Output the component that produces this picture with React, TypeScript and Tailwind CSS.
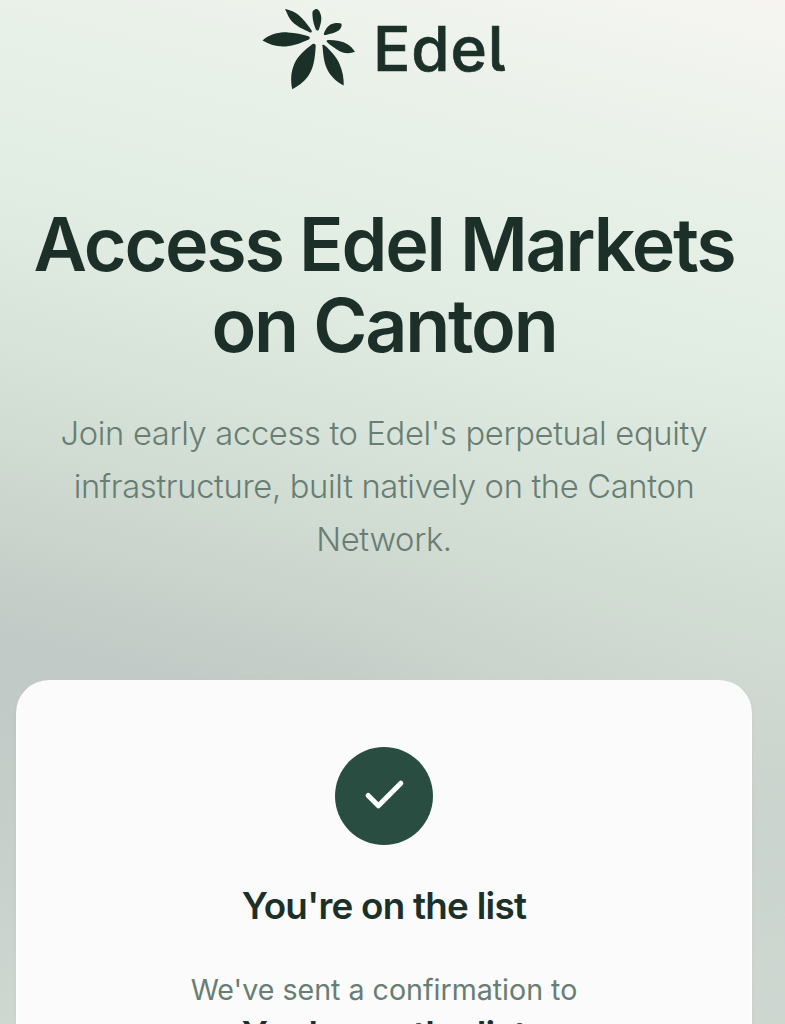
import React from 'react';

const petals = [
    'M12.5 40.5C20 34 29 32 38 32.4C45 32.6 53 34.2 58.500 36.300C60.300 37.200 60.200 39 58.300 39.800C52 42.500 44 46 36 46.400C27 47 20 44.800 12.500 40.500Z',
    'M35 9C41 10 47.500 13.200 52 18.200C55.500 22 59.800 27.500 61.600 30.400C62.400 32 61 33 59.500 32.200C53.500 29.300 46.500 26.500 42 21.500C38.800 18 37.200 13.500 35 9Z',
    'M63.200 10.500C65.800 8.200 68 8.200 69.500 11.500C71.800 15.800 71.800 19.500 70.500 24.200L69 29.200C68.500 31 66.500 31 65.800 29.200C64 25 62.600 20 62.500 15.500C62.400 13.300 62.300 11.500 63.200 10.500Z',
    'M74 33.200C76 27.500 79.500 24 84.500 23.200C87 22.800 89.500 22.800 91.200 23.500C92.300 25.500 91.300 28.200 89 30.200C85 33.200 80.500 33.500 76 35C74.200 35.400 73.500 34.700 74 33.200Z',
    'M78 39.900C85.500 39.800 92.500 41 97.500 44.200C100.500 46 103 48.800 105 51.800C98.500 54.500 92 53.200 86.500 49.300C82.500 46.500 79 44.500 77 42C76.200 40.900 76.600 40.100 78 39.900Z',
    'M72.500 46.300C71.500 44.700 73.500 44.200 75.200 45.800C80.500 50.500 87 57.500 89.700 64.500C92.500 71 94 78.500 93.700 85.500C86 81.500 80.500 76 77.300 69.500C73.500 62 73.300 53.500 72.500 46.300Z',
    'M62.300 44.300C64 43.200 65.800 44 65.700 46C65 57 64.200 68 57.500 77C53.500 82.500 48 86.200 42.200 89.300C40.300 80 41 71 44.500 63.500C48.200 55.500 55.500 49.300 62.300 44.300Z',
];

const Logo: React.FC = () => (
    <div className="flex h-[90px] self-start pl-[250px]">
        <svg className="h-[100px] w-[120px] shrink-0" viewBox="0 0 120 100" fill="#1c302a">
            {petals.map((d) => (
                <path key={d} d={d} />
            ))}
        </svg>
        {/* cv05 gives the wordmark its tailed l */}
        <span className="ml-[3px] pt-[10px] text-[62px] leading-[78px] font-medium tracking-[0.9px] text-[#1c302a] [font-feature-settings:'cv05'] [-webkit-text-stroke:0.7px_#1c302a]">
            Edel
        </span>
    </div>
);

const ConfirmationCard: React.FC = () => (
    <div className="mt-[113px] flex h-[480px] w-[736px] flex-col items-center rounded-[33px] border border-white/60 bg-[#fafbfa] pt-[66px] text-center shadow-[0_2px_4px_rgba(30,60,50,0.04)]">
        <div className="flex size-[98px] items-center justify-center rounded-full bg-[#294e41]">
            <svg className="size-[49px]" viewBox="0 0 24 24" fill="none" stroke="white" strokeWidth="2.5" strokeLinecap="round" strokeLinejoin="round">
                <path d="M20 6 9 17l-5-5" />
            </svg>
        </div>
        <h2 className="mt-[32px] text-[36.8px] leading-[57px] font-semibold tracking-[-0.74px] text-[#1c302a]">You're on the list</h2>
        <p className="mt-[33px] text-[28.6px] leading-[46.5px] text-[#687d74]">
            We've sent a confirmation to
        </p>
        <p className="text-[36.8px] leading-[44px] font-semibold tracking-[-0.74px] text-[#1c302a]">You're on the list</p>
    </div>
);

export default function App() {
    return (
        <main className="h-screen overflow-hidden bg-[radial-gradient(ellipse_at_100%_92%,rgba(212,222,214,0.6),rgba(212,222,214,0)_45%),linear-gradient(194deg,#f6f5f1_0%,#e6f0e7_20%,#e1ece3_32%,#d8e4da_43%,#cbd5cd_58%,#c1cac6_68%,#c1cac6_74%,#cfd7d1_100%)] font-['Inter',sans-serif]">
            <div className="flex w-[768px] flex-col items-center">
                <Logo />
                <h1 className="mt-[114px] text-center text-[73.6px] leading-[81px] font-semibold tracking-[-2.21px] text-[#1c3029]">
                    Access Edel Markets
                    <br />
                    on Canton
                </h1>
                <p className="mt-[41px] w-[670px] text-center text-[32.7px] leading-[53.2px] font-light tracking-[-0.33px] text-[#687d74]">
                    Join early access to Edel's perpetual equity infrastructure, built natively on the Canton Network.
                </p>
                <ConfirmationCard />
            </div>
        </main>
    );
}
